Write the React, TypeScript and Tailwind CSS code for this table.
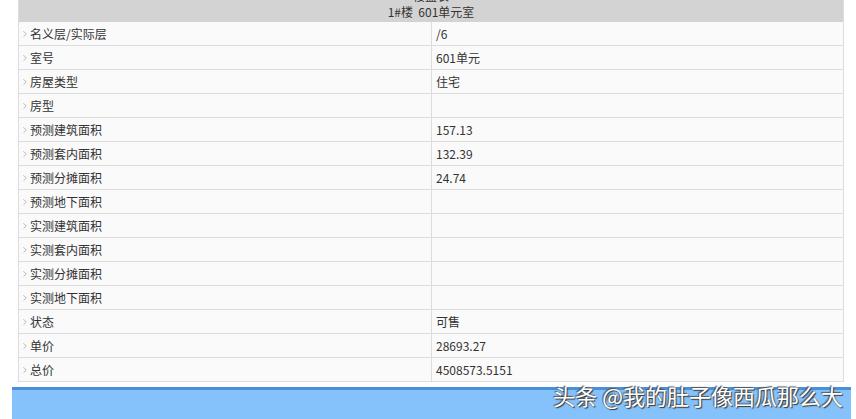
import { ChevronRight } from "lucide-react";

const ROWS: [string, string][] = [
  ["名义层/实际层", "/6"],
  ["室号", "601单元"],
  ["房屋类型", "住宅"],
  ["房型", ""],
  ["预测建筑面积", "157.13"],
  ["预测套内面积", "132.39"],
  ["预测分摊面积", "24.74"],
  ["预测地下面积", ""],
  ["实测建筑面积", ""],
  ["实测套内面积", ""],
  ["实测分摊面积", ""],
  ["实测地下面积", ""],
  ["状态", "可售"],
  ["单价", "28693.27"],
  ["总价", "4508573.5151"],
];

export default function App() {
  return (
    <div
      className="w-[856px] h-[419px] overflow-hidden bg-white text-[12px] text-[#333]"
      style={{ fontFamily: '"Noto Sans CJK SC", "Noto Sans", sans-serif' }}
    >
      <div className="-mt-[13px]">
        <div className="mx-[18px] w-[826px] border-x border-[#ddd]">
          <div className="bg-[#d3d3d3] pt-[1px] pb-[2px] text-center leading-[16px]">
            <div>楼盘表</div>
            <div>1#楼&nbsp;&nbsp;601单元室</div>
          </div>
          {ROWS.map(([label, value]) => (
            <div
              key={label}
              className="flex h-[24px] border-b border-[#ddd] bg-[#fafafa]"
            >
              <div className="flex w-[413px] items-center border-r border-[#ddd] pl-[1px]">
                <ChevronRight className="text-[#aaa]" size={10} strokeWidth={2} />
                <span>{label}</span>
              </div>
              <div className="flex flex-1 items-center pl-[4px]">{value}</div>
            </div>
          ))}
        </div>
        <div className="relative mt-[5px] ml-[12px] w-[839px] h-[40px] border-t-[3px] border-[#4a90d9] bg-[#85c1fa]">
          <div
            className="absolute right-[8px] -top-[8px] text-[22px] leading-[26px] text-white"
            style={{ textShadow: "1px 1px 1px #333, -1px -1px 1px #555" }}
          >
            头条 @我的肚子像西瓜那么大
          </div>
        </div>
      </div>
    </div>
  );
}
